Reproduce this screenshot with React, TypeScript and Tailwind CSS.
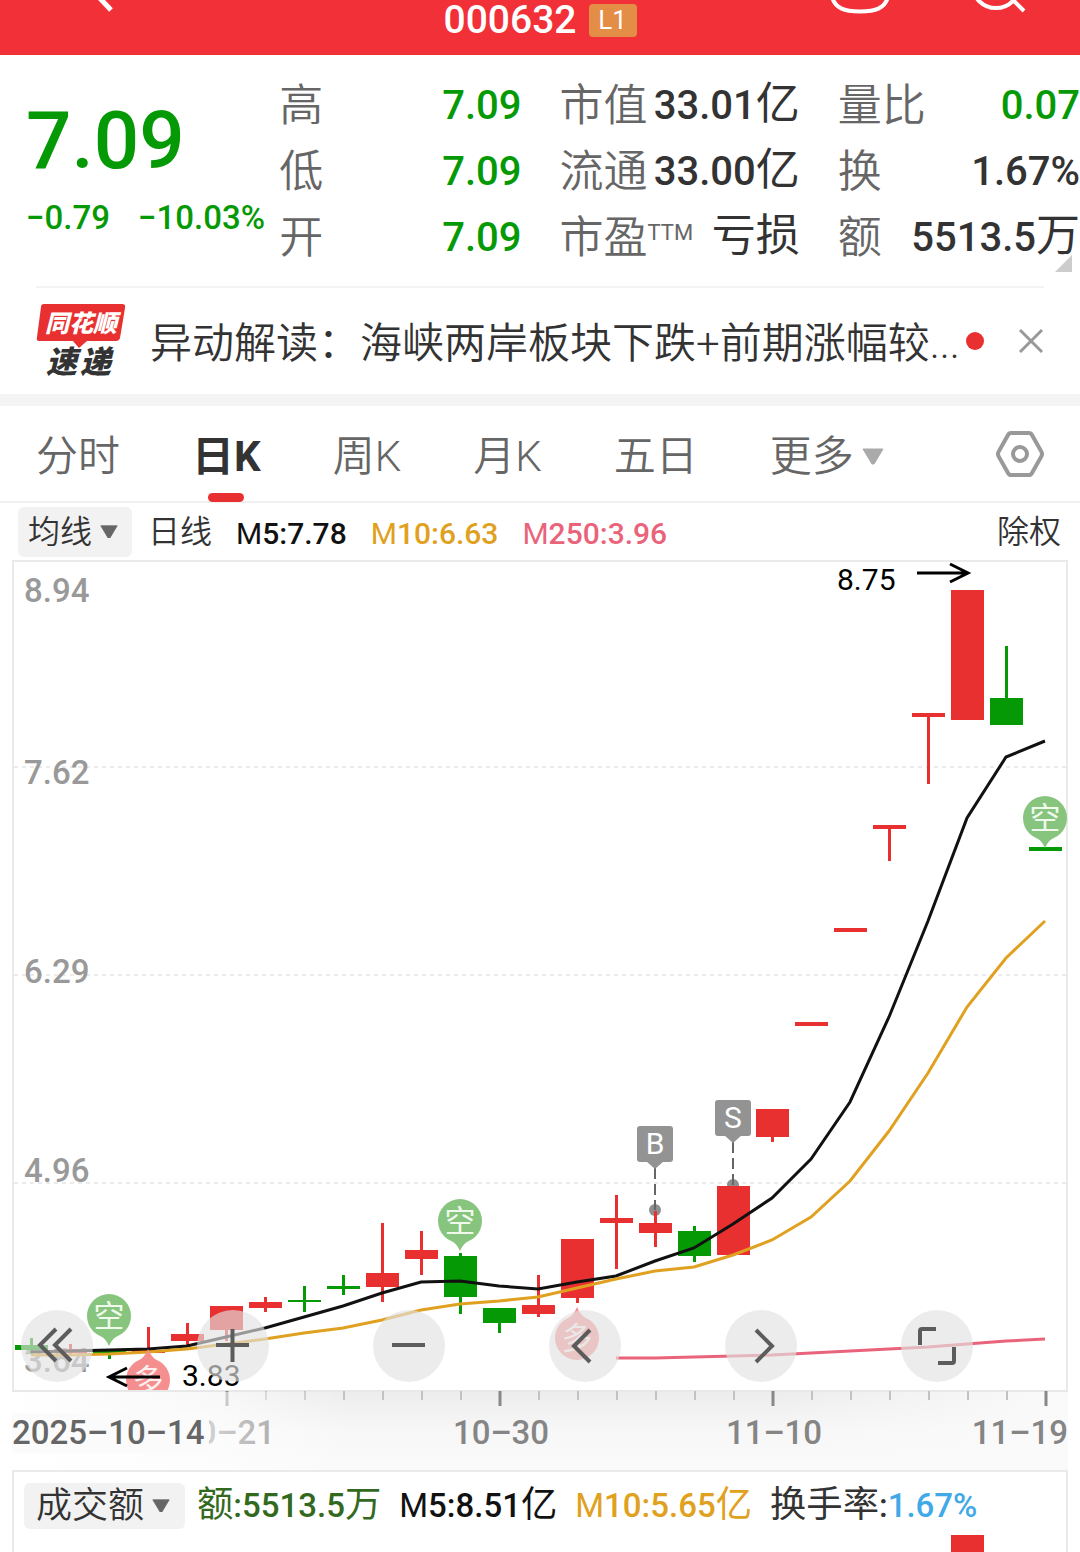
import { useState } from "react";
import type { ReactNode } from "react";

const UP = "#e93030";
const DOWN = "#059a05";

const STEP = 39;
const FIRST_X = 31;
const xAt = (i: number) => FIRST_X + i * STEP;

type Candle = { top: number; bottom: number; high: number; low: number; up: boolean };

const c = (top: number, bottom: number, high: number, low: number, up = true): Candle => ({
  top,
  bottom,
  high,
  low,
  up,
});

const candles: Candle[] = [
  c(1345, 1350, 1338, 1354, false),
  c(1349, 1353, 1344, 1356),
  c(1350, 1353, 1350, 1359, false),
  c(1350, 1353, 1327, 1353),
  c(1334, 1341, 1323, 1347),
  c(1306, 1330, 1306, 1341),
  c(1302, 1308, 1297, 1312),
  c(1300, 1302, 1286, 1312, false),
  c(1286, 1289, 1275, 1295, false),
  c(1273, 1287, 1223, 1302),
  c(1250, 1259, 1231, 1275),
  c(1256, 1297, 1253, 1314, false),
  c(1308, 1323, 1308, 1333, false),
  c(1305, 1314, 1275, 1317),
  c(1239, 1298, 1239, 1303),
  c(1218, 1223, 1195, 1269),
  c(1223, 1233, 1211, 1247),
  c(1231, 1256, 1226, 1262, false),
  c(1186, 1255, 1186, 1255),
  c(1109, 1137, 1109, 1142),
  c(1022, 1026, 1022, 1026),
  c(928, 932, 928, 932),
  c(825, 829, 825, 861),
  c(713, 717, 713, 784),
  c(590, 720, 590, 720),
  c(698, 725, 646, 725, false),
  c(847, 851, 847, 851, false),
];

const m5 = [
  1352, 1351, 1350, 1349, 1346, 1337, 1328, 1317, 1306, 1293, 1282, 1281, 1286, 1289, 1282, 1276, 1261, 1248,
  1224, 1198, 1159, 1102, 1017, 921, 818, 757, 741,
];
const m10 = [
  1355, 1355, 1354, 1352, 1349, 1344, 1339, 1333, 1328, 1320, 1310, 1304, 1301, 1297, 1288, 1279, 1271, 1267,
  1255, 1240, 1217, 1181, 1131, 1073, 1007, 958, 921,
];
const m250 = [1358, 1358, 1357, 1356, 1355, 1353, 1351, 1349, 1347, 1344, 1341, 1339];

const toPoints = (ys: number[], start = 0) => ys.map((y, i) => `${xAt(i + start)},${y}`).join(" ");

const priceLabels = [
  { text: "8.94", y: 602 },
  { text: "7.62", y: 784 },
  { text: "6.29", y: 983 },
  { text: "4.96", y: 1182 },
  { text: "3.64", y: 1372 },
];

const tabs = ["分时", "日K", "周K", "月K", "五日"];

function Triangle({ className }: { className: string }) {
  return (
    <svg viewBox="0 0 22 17" className={className} aria-hidden="true">
      <path d="M1 1h20L12 16h-2z" fill="currentColor" stroke="currentColor" strokeLinejoin="round" />
    </svg>
  );
}

function Stat({ label, sup, value, green }: { label: string; sup?: string; value: string; green?: boolean }) {
  return (
    <div className="flex h-[66px] items-center justify-between whitespace-nowrap">
      <dt className="flex text-[44px] font-[350] text-[#666]">
        {label}
        {sup && <sup className="top-0 mt-3 text-[22px] leading-8 font-normal">{sup}</sup>}
      </dt>
      <dd className={green ? "text-[40px] font-medium text-[#059a05]" : "text-[40px] font-medium text-[#333]"}>
        <Mixed text={value} />
      </dd>
    </div>
  );
}

// digits stay medium, Chinese units and the M prefix are drawn lighter
function Mixed({ text }: { text: string }) {
  return (
    <>
      {text.split(/([\u4e00-\u9fff]+|M)/).map((part, i) => (
        <span key={i} className={part === "M" ? "font-normal" : i % 2 ? "text-[1.1em] leading-none font-normal" : ""}>
          {part}
        </span>
      ))}
    </>
  );
}

function ShortPin({ x, y }: { x: number; y: number }) {
  return (
    <g>
      <path d={`M${x - 14} ${y + 16}Q${x - 3} ${y + 22} ${x} ${y + 30}Q${x + 3} ${y + 22} ${x + 14} ${y + 16}z`} fill="#87c47e" />
      <circle cx={x} cy={y} r="22" fill="#87c47e" />
      <text x={x} y={y + 11} textAnchor="middle" fontSize="31" fill="#effaed">
        空
      </text>
    </g>
  );
}

function LongPin({ x, y }: { x: number; y: number }) {
  return (
    <g>
      <path d={`M${x - 14} ${y - 16}Q${x - 3} ${y - 22} ${x} ${y - 31}Q${x + 3} ${y - 22} ${x + 14} ${y - 16}z`} fill="#f58f8f" />
      <circle cx={x} cy={y} r="22" fill="#f58f8f" />
      <text x={x} y={y + 11} textAnchor="middle" fontSize="31" fill="#fff0f0">
        多
      </text>
    </g>
  );
}

function TradeFlag({ x, y, dotY, text }: { x: number; y: number; dotY: number; text: string }) {
  return (
    <g>
      <circle cx={x} cy={dotY} r="6" fill="#8e8e8e" />
      <path d={`M${x} ${y + 42}V${dotY}`} stroke="#666" strokeWidth="2" strokeDasharray="11 5" />
      <path d={`M${x - 9} ${y + 35}h18l-9 8z`} fill="#939393" />
      <rect x={x - 18} y={y} width="36" height="36" rx="3" fill="#939393" />
      <text x={x} y={y + 28} textAnchor="middle" fontSize="30" fill="#fff">
        {text}
      </text>
    </g>
  );
}

function KLineChart() {
  return (
    <svg viewBox="0 560 1080 830" className="block h-auto w-full" role="img" aria-label="日K">
      <path d="M13 1390V561H1067V1390" fill="none" stroke="#eaeaea" strokeWidth="2" />
      {[767, 975, 1183].map((y) => (
        <path key={y} d={`M14 ${y}H1066`} stroke="#ebebeb" strokeWidth="2" strokeDasharray="4 4" />
      ))}
      {priceLabels.map((p) => (
        <text key={p.text} x="24" y={p.y} fontSize="33" fontWeight="500" fill="#999">
          {p.text}
        </text>
      ))}

      <TradeFlag x={655} y={1126} dotY={1210} text="B" />
      <TradeFlag x={733} y={1100} dotY={1185} text="S" />

      {candles.map((k, i) => {
        const x = xAt(i);
        const color = k.up ? UP : DOWN;
        return (
          <g key={i} fill={color}>
            <rect x={x - 1} y={k.high} width="3" height={k.low - k.high} />
            <rect x={x - 16} y={k.top} width="33" height={k.bottom - k.top} />
          </g>
        );
      })}

      <polyline points={toPoints(m250, 15)} fill="none" stroke="#e9647a" strokeWidth="3" />
      <polyline points={toPoints(m5)} fill="none" stroke="#111" strokeWidth="3" />
      <polyline points={toPoints(m10)} fill="none" stroke="#e0a020" strokeWidth="3" />

      <ShortPin x={109} y={1316} />
      <ShortPin x={460} y={1221} />
      <ShortPin x={1045} y={818} />
      <LongPin x={148} y={1380} />
      <LongPin x={577} y={1338} />

      <g fill="none" stroke="#000" strokeWidth="3">
        <path d="M917 573H967M950 564L968 573L950 582" />
        <path d="M160 1377H110M127 1368L109 1377L127 1386" />
      </g>
      <text x="837" y="590" fontSize="30" fill="#000">
        8.75
      </text>
      <text x="182" y="1386" fontSize="30" fill="#000">
        3.83
      </text>
    </svg>
  );
}

function DateAxis() {
  return (
    <svg viewBox="0 1389 1080 80" className="block h-auto w-full" role="img" aria-label="日期">
      <defs>
        <linearGradient id="shade" x1="0" y1="0" x2="0" y2="1">
          <stop offset="0" stopColor="#ececec" />
          <stop offset="0.5" stopColor="#f7f7f7" />
          <stop offset="1" stopColor="#fafafa" />
        </linearGradient>
        <linearGradient id="fade" x1="0" y1="0" x2="1" y2="0">
          <stop offset="0" stopColor="#fff" />
          <stop offset="0.6" stopColor="#fff" stopOpacity="0.6" />
          <stop offset="1" stopColor="#fff" stopOpacity="0" />
        </linearGradient>
        <linearGradient id="edge" x1="0" y1="0" x2="1" y2="0">
          <stop offset="0" stopColor="#fafafa" stopOpacity="0" />
          <stop offset="1" stopColor="#fafafa" />
        </linearGradient>
      </defs>
      <rect x="12" y="1389" width="1056" height="80" fill="url(#shade)" />
      <rect x="780" y="1389" width="288" height="80" fill="url(#edge)" />
      <path d="M12 1390H1068" stroke="#e8e8e8" strokeWidth="2" />
      {candles.map((_, i) => {
        if (i < 5) return null;
        const major = [5, 12, 19, 26].includes(i);
        return (
          <path
            key={i}
            d={`M${xAt(i) + 1} 1390v${major ? 15 : 9}`}
            stroke={major ? "#888" : "#c2c2c2"}
            strokeWidth={major ? 3 : 2}
          />
        );
      })}
      <g fontSize="33" fontWeight="500" fill="#858585">
        <text x="227" y="1443" textAnchor="middle">10–21</text>
        <text x="501" y="1443" textAnchor="middle">10–30</text>
        <text x="774" y="1443" textAnchor="middle">11–10</text>
        <text x="1068" y="1443" textAnchor="end">11–19</text>
      </g>
      <rect x="12" y="1391" width="340" height="78" fill="url(#fade)" />
      <rect x="12" y="1412" width="197" height="40" fill="#fbfbfb" />
      <text x="12" y="1443" fontSize="33" fontWeight="500" fill="#666">2025–10–14</text>
    </svg>
  );
}

const controls: { label: string; icon: ReactNode }[] = [
  { label: "最早", icon: <path d="M35 19L19 35L35 51M50 19L34 35L50 51" /> },
  { label: "放大", icon: <path d="M19 35H52M35.5 19V52" /> },
  { label: "缩小", icon: <path d="M19 35H52" /> },
  { label: "左移", icon: <path d="M41 20L25 36L41 52" /> },
  { label: "右移", icon: <path d="M31 20L47 36L31 52" /> },
  { label: "全屏", icon: <path d="M19 35V21Q19 19 21 19H35M53 37V51Q53 53 51 53H37" /> },
];

export default function App() {
  const [tab, setTab] = useState("日K");
  const [showNews, setShowNews] = useState(true);

  return (
    <div className="w-full overflow-hidden bg-white font-[Roboto,'Noto_Sans_CJK_SC',sans-serif] text-[#333]">
      <header className="relative flex h-[55px] items-start justify-center bg-[#f23038] text-white">
        <button aria-label="返回" className="absolute top-0 left-[84px]">
          <svg width="32" height="14" viewBox="0 0 32 14" className="block">
            <path d="M11 -7L27 10" stroke="white" strokeWidth="5" />
          </svg>
        </button>
        <h1 className="flex items-center gap-3">
          <span className="text-[39px] leading-10 font-medium">000632</span>
          <span className="flex h-[33px] w-12 items-center justify-center rounded bg-[#e48d47] text-[26px]">L1</span>
        </h1>
        <div className="absolute top-0 right-[52px] flex gap-20">
          <button aria-label="智能助手">
            <svg width="60" height="14" viewBox="0 0 60 14" className="block">
              <path d="M2 -3C5 8 14 11.5 30 11.5S55 8 58 -3" fill="none" stroke="white" strokeWidth="4" />
            </svg>
          </button>
          <button aria-label="搜索">
            <svg width="58" height="14" viewBox="0 0 58 14" className="block">
              <circle cx="26" cy="-16" r="24" fill="none" stroke="white" strokeWidth="4" />
              <path d="M42 -1L54 11" stroke="white" strokeWidth="4" />
            </svg>
          </button>
        </div>
      </header>

      <section className="relative grid grid-cols-[253fr_280fr_278fr_242fr] pt-[18px] pb-[15px] pl-[26px]">
        <div className="whitespace-nowrap text-[#059a05]">
          <p className="pt-[22px] text-[80px] leading-[92px] font-medium">7.09</p>
          <p className="flex gap-7 pt-[6px] text-[33px] font-medium">
            <span>−0.79</span>
            <span>−10.03%</span>
          </p>
        </div>
        <dl className="pr-[38px]">
          <Stat label="高" value="7.09" green />
          <Stat label="低" value="7.09" green />
          <Stat label="开" value="7.09" green />
        </dl>
        <dl className="pr-[38px]">
          <Stat label="市值" value="33.01亿" />
          <Stat label="流通" value="33.00亿" />
          <Stat label="市盈" sup="TTM" value="亏损" />
        </dl>
        <dl>
          <Stat label="量比" value="0.07" green />
          <Stat label="换" value="1.67%" />
          <Stat label="额" value="5513.5万" />
        </dl>
        <svg width="17" height="17" viewBox="0 0 17 17" className="absolute right-2 bottom-[14px]">
          <path d="M17 0V17H0z" fill="#ccc" />
        </svg>
      </section>

      {showNews && (
        <section className="mx-9 flex h-[108px] items-center border-t-2 border-[#f4f4f4]">
          <svg width="90" height="80" viewBox="0 -2 90 80" className="shrink-0">
            <path
              d="M8 1H86Q90 1 89 5L84 35Q83 38 80 38H51L43 45L37 38H3Q0 38 1 34L5 4Q5 1 8 1z"
              fill="#e93030"
            />
            <text x="45" y="29" textAnchor="middle" fontSize="24" fontWeight="900" fontStyle="italic" fill="#fff">
              同花顺
            </text>
            <text x="10" y="70" fontSize="31" fontWeight="900" fontStyle="italic" fill="#333">
              速
            </text>
            <text x="44" y="70" fontSize="31" fontWeight="900" fontStyle="italic" fill="#333">
              递
            </text>
          </svg>
          <a href="#news" className="ml-6 pt-1 text-[42px] font-[350] whitespace-nowrap">
            异动解读：海峡两岸板块下跌+前期涨幅较...
          </a>
          <span className="ml-[6px] size-[18px] shrink-0 rounded-full bg-[#e93030]" />
          <button aria-label="关闭" onClick={() => setShowNews(false)} className="ml-auto">
            <svg width="26" height="26" viewBox="0 0 26 26" className="block">
              <path d="M2 2L24 24M24 2L2 24" stroke="#999" strokeWidth="3" />
            </svg>
          </button>
        </section>
      )}

      <div className="h-3 bg-[#f4f4f4]" />

      <nav className="flex h-[97px] items-center gap-[72px] border-b-2 border-[#f1f1f1] px-9 text-[42px] text-[#666]">
        {tabs.map((name) => (
          <button
            key={name}
            onClick={() => setTab(name)}
            className={
              name === tab
                ? "relative flex h-full items-center pt-[6px] font-bold whitespace-nowrap text-[#333]"
                : "relative flex h-full items-center pt-[6px] font-[350] whitespace-nowrap"
            }
          >
            {name}
            {name === tab && (
              <span className="absolute -bottom-px left-1/2 h-[9px] w-9 -translate-x-1/2 rounded-full bg-[#e93030]" />
            )}
          </button>
        ))}
        <button className="flex items-center gap-2 pt-[6px] font-[350] whitespace-nowrap">
          更多
          <Triangle className="w-[22px] text-[#aaa]" />
        </button>
        <button aria-label="设置" className="ml-auto">
          <svg width="48" height="48" viewBox="0 0 48 48" className="block" fill="none" stroke="#999" strokeWidth="4">
            <path d="M15 3H33Q35 3 36 5L45 21Q47 24 45 27L36 43Q35 45 33 45H15Q13 45 12 43L3 27Q1 24 3 21L12 5Q13 3 15 3z" />
            <circle cx="24" cy="24" r="7" />
          </svg>
        </button>
      </nav>

      <div className="flex h-[57px] items-center pr-[19px] pl-[18px] text-[32px] font-[350] whitespace-nowrap">
        <button className="flex h-[50px] items-center gap-2 rounded-md bg-[#f2f2f2] pr-[14px] pl-[10px]">
          均线
          <Triangle className="w-[18px] text-[#666]" />
        </button>
        <span className="ml-4">日线</span>
        <div className="ml-6 flex gap-6 pt-1 text-[30px] font-medium">
          <span className="text-[#111]">
            <Mixed text="M5:7.78" />
          </span>
          <span className="text-[#e0a020]">
            <Mixed text="M10:6.63" />
          </span>
          <span className="text-[#e9647a]">
            <Mixed text="M250:3.96" />
          </span>
        </div>
        <button className="ml-auto">除权</button>
      </div>

      <div className="relative">
        <KLineChart />
        <div className="absolute inset-x-0 bottom-2 flex justify-between pr-[107px] pl-[21px]">
          {controls.map((b) => (
            <button key={b.label} aria-label={b.label} className="size-[72px] rounded-full bg-[#e2e2e2]/65">
              <svg viewBox="0 0 72 72" className="block" fill="none" stroke="#5c5c5c" strokeWidth="4">
                {b.icon}
              </svg>
            </button>
          ))}
        </div>
      </div>
      <DateAxis />

      <section className="mx-3 border-x-2 border-t-2 border-[#eaeaea]">
        <div className="flex h-[63px] items-center pt-1 pl-[10px] text-[33px] font-medium whitespace-nowrap">
          <button className="flex h-[46px] items-center gap-2 rounded-md bg-[#f2f2f2] pr-[15px] pl-3 text-[36px] font-[350]">
            成交额
            <Triangle className="w-[18px] text-[#666]" />
          </button>
          <div className="ml-3 flex gap-[18px]">
            <span className="text-[#33691e]">
              <Mixed text="额:5513.5万" />
            </span>
            <span className="text-[#111]">
              <Mixed text="M5:8.51亿" />
            </span>
            <span className="text-[#e0a020]">
              <Mixed text="M10:5.65亿" />
            </span>
            <span>
              <Mixed text="换手率:" />
              <span className="text-[#42a9e8]">1.67%</span>
            </span>
          </div>
        </div>
        <svg viewBox="14 0 1052 18" className="block h-auto w-full" role="img" aria-label="成交额">
          <rect x={xAt(24) - 16} y="0" width="33" height="18" fill={UP} />
        </svg>
      </section>
    </div>
  );
}
